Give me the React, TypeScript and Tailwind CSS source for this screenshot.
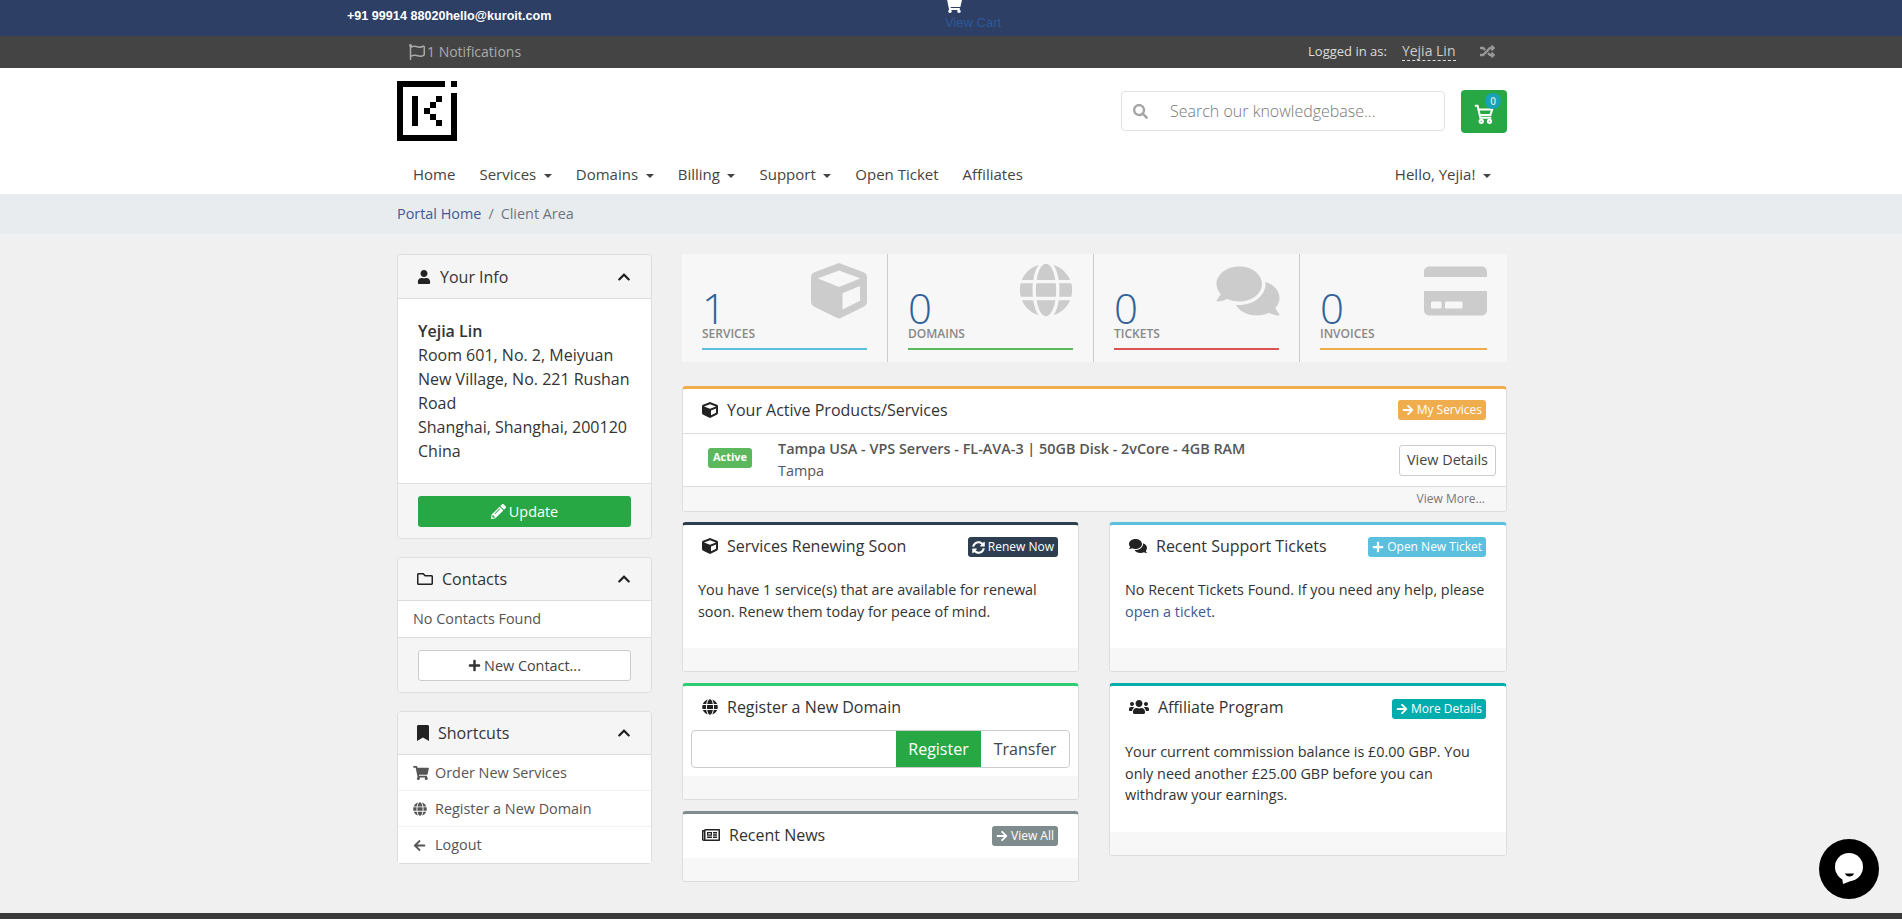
import React from 'react';
import {
  FaArrowLeft, FaArrowRight, FaBookmark, FaChevronUp, FaComments, FaCreditCard, FaCube, FaGlobe,
  FaPencilAlt, FaPlus, FaRandom, FaRegFlag, FaRegFolder, FaRegNewspaper, FaSearch, FaShoppingCart,
  FaSyncAlt, FaUser, FaUsers,
} from 'react-icons/fa';

const OPEN = "font-['Open_Sans',sans-serif]";

function Logo() {
  return (
    <svg width="60" height="60" viewBox="0 0 60 60" className="block">
      <rect x="0" y="0" width="48" height="6" />
      <rect x="54" y="0" width="6" height="6" />
      <rect x="0" y="0" width="6" height="60" />
      <rect x="0" y="54" width="60" height="6" />
      <rect x="54" y="12" width="6" height="48" />
      <rect x="15" y="15" width="6" height="30" />
      <rect x="39" y="15" width="6" height="6" />
      <rect x="33" y="21" width="6" height="6" />
      <rect x="27" y="27" width="6" height="6" />
      <rect x="33" y="33" width="6" height="6" />
      <rect x="39" y="39" width="6" height="6" />
    </svg>
  );
}

function Caret() {
  return <span className="ml-[7.6px] inline-block border-x-[4px] border-t-[4px] border-x-transparent border-t-[#444] align-[2px]" />;
}

function NavItem({ label, caret }: { label: string; caret?: boolean }) {
  return (
    <a className="px-3 text-[15px] leading-[24px] text-[#444] whitespace-nowrap">
      {label}
      {caret && <Caret />}
    </a>
  );
}

function SideHeader({ icon, title, tall }: { icon: React.ReactNode; title: string; tall?: boolean }) {
  return (
    <div className={`shrink-0 flex items-center justify-between bg-[#f5f5f5] border-b border-[#ddd] pl-[19px] pr-[20px] rounded-t-[4px] ${tall ? 'h-[44px]' : 'h-[43px]'}`}>
      <div className="flex items-center gap-[9px] text-[16px] text-[#333]">
        {icon}
        <span>{title}</span>
      </div>
      <FaChevronUp className="w-[14px] h-[14px] text-[#222]" />
    </div>
  );
}

function SideLink({ icon, label, last }: { icon: React.ReactNode; label: string; last?: boolean }) {
  return (
    <div className={`h-[36px] flex items-center pl-[15px] text-[14.4px] text-[#555] bg-white ${last ? '' : 'border-b border-[#f2f2f2]'}`}>
      <span className="w-[22px] flex items-center">{icon}</span>
      {label}
    </div>
  );
}

function Badge({ color, icon, label }: { color: string; icon: React.ReactNode; label: string }) {
  return (
    <span className={`h-[20px] px-[4px] rounded-[3px] flex items-center gap-[3px] text-[12px] font-medium text-white whitespace-nowrap ${color}`}>
      {icon}
      {label}
    </span>
  );
}

function Panel({ border, icon, title, badge, children }: {
  border: string; icon: React.ReactNode; title: string; badge?: React.ReactNode; children?: React.ReactNode;
}) {
  return (
    <div className={`rounded-[4px] border border-[#ddd] border-t-[3px] bg-white overflow-hidden flex flex-col ${border}`}>
      <div className="flex items-start justify-between pl-[19px] pr-[20px] pt-[10px]">
        <div className="flex items-center h-[22px] gap-[9px] text-[16px] text-[#333]">
          {icon}
          <span>{title}</span>
        </div>
        {badge && <div className="mt-[2px]">{badge}</div>}
      </div>
      <div className="flex-1">{children}</div>
      <div className="bg-[#f7f7f7] h-[23px]" />
    </div>
  );
}

function Stat({ value, label, line, icon, last }: { value: string; label: string; line: string; icon: React.ReactNode; last?: boolean }) {
  return (
    <div className={`relative h-[108px] bg-[#f7f7f7] px-[20px] pt-[36px] ${last ? 'flex-1' : 'w-[206px] border-r border-[#ccc]'}`}>
      <div className="text-[42px] leading-[36px] font-light text-[#2f6299]">{value}</div>
      <div className="text-[12px] leading-[16px] font-semibold text-[#888] uppercase">{label}</div>
      <div className={`mt-[6px] h-[2px] ${line}`} />
      <div className="absolute right-[20px] top-[9px] text-[#ccc]">{icon}</div>
    </div>
  );
}

export default function App() {
  return (
    <div className={`${OPEN} h-[919px] overflow-hidden flex flex-col bg-[#f0f0f0]`}>
      <div className="h-[36px] shrink-0 bg-[#2e3f66] relative font-['Liberation_Sans',sans-serif]">
        <div className="pl-[347px] pt-[8px] text-[12.6px] leading-[16px] font-bold text-white">+91 99914 88020hello@kuroit.com</div>
        <div className="absolute left-[944px] top-[-4px] flex flex-col items-start">
          <FaShoppingCart className="w-[18px] h-[18px] text-white" />
          <span className="ml-[1px] text-[13px] leading-[18px] text-[#2a5a9a]">View Cart</span>
        </div>
      </div>
      <div className="h-[32px] shrink-0 bg-[#444] flex items-center pl-[409px] pb-[1px]">
        <FaRegFlag className="w-[16px] h-[16px] text-[#aaa]" />
        <span className="ml-[2px] text-[14px] text-[#aaa]">1 Notifications</span>
        <span className="ml-[787px] text-[13px] text-[#ddd] whitespace-nowrap">Logged in as:</span>
        <span className="ml-[15px] text-[14px] leading-[18px] text-[#ccc] border-b border-dashed border-[#ddd] whitespace-nowrap">Yejia Lin</span>
        <FaRandom className="ml-[24px] w-[15px] h-[15px] text-[#999]" />
      </div>

      <div className="h-[126px] shrink-0 bg-white pl-[397px]">
        <div className="w-[1110px]">
          <div className="flex justify-between h-[94px]">
            <div className="pt-[13px]"><Logo /></div>
            <div className="flex pt-[23px] gap-[16px]">
              <div className="w-[324px] h-[40px] rounded-[4px] border border-[#e2e2e2] flex items-center pl-[11px]">
                <FaSearch className="w-[15px] h-[15px] text-[#a5a5a5]" />
                <span className="ml-[22px] text-[16px] font-light text-[#777]">Search our knowledgebase...</span>
              </div>
              <div className="relative -mt-[1px] w-[46px] h-[43px] rounded-[4px] bg-[#28a745] flex items-center justify-center">
                <svg width="22" height="22" viewBox="0 0 24 24" fill="none" stroke="white" strokeWidth="2.2" className="mt-[4px]">
                  <path d="M2 3h3l3 13h12" />
                  <path d="M6 7h15l-2 6H7.500" />
                  <circle cx="9" cy="20" r="1.8" />
                  <circle cx="18" cy="20" r="1.8" />
                </svg>
                <span className="absolute left-[24px] top-[3px] w-[16px] h-[16px] rounded-full bg-[#17a2b8] text-[10px] leading-[16px] text-center text-[#cdeee0] font-semibold">0</span>
              </div>
            </div>
          </div>
          <div className="flex justify-between items-center h-[24px] pl-[4px] pr-[4px]">
            <div className="flex">
              <NavItem label="Home" />
              <NavItem label="Services" caret />
              <NavItem label="Domains" caret />
              <NavItem label="Billing" caret />
              <NavItem label="Support" caret />
              <NavItem label="Open Ticket" />
              <NavItem label="Affiliates" />
            </div>
            <NavItem label="Hello, Yejia!" caret />
          </div>
        </div>
      </div>

      <div className="h-[40px] shrink-0 bg-[#e9ecef] flex items-center pl-[397px] pb-[1px] text-[14.4px]">
        <span className="text-[#44598f]">Portal Home</span>
        <span className="px-[7px] text-[#6c757d]">/</span>
        <span className="text-[#6c757d]">Client Area</span>
      </div>

      <div className="flex-1 pl-[397px] pt-[20px] flex gap-[30px] items-start">
        <div className="w-[255px] shrink-0 flex flex-col gap-[18px]">
          <div className="rounded-[4px] border border-[#ddd] bg-white">
            <SideHeader tall icon={<FaUser className="w-[14px] h-[14px] text-[#222]" />} title="Your Info" />
            <div className="h-[184px] px-[20px] pt-[20px] text-[16px] leading-[24px] text-[#333]">
              <div className="font-semibold">Yejia Lin</div>
              <div>Room 601, No. 2, Meiyuan New Village, No. 221 Rushan Road</div>
              <div>Shanghai, Shanghai, 200120</div>
              <div>China</div>
            </div>
            <div className="h-[55px] bg-[#f5f5f5] border-t border-[#ddd] rounded-b-[4px] px-[20px] pt-[12px]">
              <div className="h-[31px] rounded-[3px] bg-[#28a745] flex items-center justify-center gap-[3px] text-[14.4px] text-white">
                <FaPencilAlt className="w-[15px] h-[15px]" />Update
              </div>
            </div>
          </div>

          <div className="rounded-[4px] border border-[#ddd] bg-white">
            <SideHeader icon={<FaRegFolder className="w-[16px] h-[16px] text-[#222]" />} title="Contacts" />
            <div className="h-[36px] flex items-center pl-[15px] text-[14.4px] text-[#555]">No Contacts Found</div>
            <div className="h-[55px] bg-[#f5f5f5] border-t border-[#ddd] rounded-b-[4px] px-[20px] pt-[12px]">
              <div className="h-[31px] rounded-[3px] bg-white border border-[#ccc] flex items-center justify-center gap-[3px] text-[14.4px] text-[#444]">
                <FaPlus className="w-[13px] h-[13px] text-[#333]" />New Contact...
              </div>
            </div>
          </div>

          <div className="rounded-[4px] border border-[#ddd] bg-white">
            <SideHeader icon={<FaBookmark className="w-[12px] h-[16px] text-[#222]" />} title="Shortcuts" />
            <SideLink icon={<FaShoppingCart className="w-[16px] h-[14px] text-[#555]" />} label="Order New Services" />
            <SideLink icon={<FaGlobe className="w-[14px] h-[14px] text-[#555]" />} label="Register a New Domain" />
            <SideLink icon={<FaArrowLeft className="w-[13px] h-[13px] text-[#555]" />} label="Logout" last />
          </div>
        </div>

        <div className="w-[825px] shrink-0">
          <div className="flex">
            <Stat value="1" label="Services" line="bg-[#5bc0de]" icon={<FaCube className="w-[56px] h-[56px]" />} />
            <Stat value="0" label="Domains" line="bg-[#5cb85c]" icon={<FaGlobe className="w-[54px] h-[54px]" />} />
            <Stat value="0" label="Tickets" line="bg-[#d9534f]" icon={<div className="-mr-[1px]"><FaComments className="w-[64px] h-[56px]" /></div>} />
            <Stat value="0" label="Invoices" line="bg-[#f0ad4e]" icon={<FaCreditCard className="w-[63px] h-[56px]" />} last />
          </div>

          <div className="mt-[24px] rounded-[4px] border border-[#ddd] border-t-[3px] border-t-[#f0ad4e] bg-white overflow-hidden">
            <div className="h-[45px] flex items-center justify-between pl-[19px] pr-[20px] pb-[2px] border-b border-[#ddd]">
              <div className="flex items-center gap-[9px] text-[16px] text-[#333]">
                <FaCube className="w-[16px] h-[16px] text-[#222]" />Your Active Products/Services
              </div>
              <Badge color="bg-[#f0ad4e]" icon={<FaArrowRight className="w-[12px] h-[12px]" />} label="My Services" />
            </div>
            <div className="h-[53px] flex items-center pl-[25px] pr-[10px] border-b border-[#ddd]">
              <span className="-mt-[5px] w-[44px] h-[20px] rounded-[3px] bg-[#5cb85c] text-white text-[11px] font-bold flex items-center justify-center">Active</span>
              <div className="ml-[26px] flex-1 text-[14.4px] leading-[22px] text-[#555]">
                <div className="font-semibold">Tampa USA - VPS Servers - FL-AVA-3 | 50GB Disk - 2vCore - 4GB RAM</div>
                <div>Tampa</div>
              </div>
              <span className="w-[97px] h-[31px] rounded-[3px] border border-[#ccc] bg-white flex items-center justify-center text-[14.4px] text-[#444]">View Details</span>
            </div>
            <div className="h-[24px] bg-[#f7f7f7] flex items-center justify-end pr-[21px] text-[12px] text-[#777]">View More...</div>
          </div>

          <div className="mt-[10px] grid grid-cols-[397px_398px] gap-x-[30px] items-start">
            <div className="flex flex-col gap-[11px]">
              <div className="h-[150px] flex flex-col">
                <Panel border="border-t-[#2c3e50] flex-1" icon={<FaCube className="w-[16px] h-[16px] text-[#222]" />} title="Services Renewing Soon"
                  badge={<Badge color="bg-[#2c3e50]" icon={<FaSyncAlt className="w-[13px] h-[13px]" />} label="Renew Now" />}>
                  <div className="px-[15px] pt-[22px] text-[14.4px] leading-[22px] text-[#333]">You have 1 service(s) that are available for renewal soon. Renew them today for peace of mind.</div>
                </Panel>
              </div>
              <div className="h-[117px] flex flex-col">
                <Panel border="border-t-[#2ecc71] flex-1" icon={<FaGlobe className="w-[16px] h-[16px] text-[#222]" />} title="Register a New Domain">
                  <div className="mx-[8px] mt-[12px] h-[38px] flex rounded-[4px] border border-[#ccc] overflow-hidden">
                    <div className="flex-1" />
                    <span className="w-[85px] bg-[#28a745] text-white text-[16px] flex items-center justify-center">Register</span>
                    <span className="w-[88px] text-[#444] text-[16px] flex items-center justify-center">Transfer</span>
                  </div>
                </Panel>
              </div>
              <div className="h-[71px] flex flex-col">
                <Panel border="border-t-[#7f8c8d] flex-1" icon={<FaRegNewspaper className="w-[18px] h-[16px] text-[#222]" />} title="Recent News"
                  badge={<Badge color="bg-[#7f8c8d]" icon={<FaArrowRight className="w-[12px] h-[12px]" />} label="View All" />} />
              </div>
            </div>
            <div className="flex flex-col gap-[11px]">
              <div className="h-[150px] flex flex-col">
                <Panel border="border-t-[#5bc0de] flex-1" icon={<FaComments className="w-[18px] h-[16px] text-[#222]" />} title="Recent Support Tickets"
                  badge={<Badge color="bg-[#5bc0de]" icon={<FaPlus className="w-[12px] h-[12px]" />} label="Open New Ticket" />}>
                  <div className="px-[15px] pt-[22px] text-[14.4px] leading-[22px] text-[#333]">No Recent Tickets Found. If you need any help, please <span className="text-[#44598f]">open a ticket</span>.</div>
                </Panel>
              </div>
              <div className="h-[173px] flex flex-col">
                <Panel border="border-t-[#00adad] flex-1" icon={<FaUsers className="w-[20px] h-[16px] text-[#222]" />} title="Affiliate Program"
                  badge={<div className="mt-[1px]"><Badge color="bg-[#00adad]" icon={<FaArrowRight className="w-[12px] h-[12px]" />} label="More Details" /></div>}>
                  <div className="px-[15px] pt-[22px] text-[14.4px] leading-[21.5px] text-[#333]">Your current commission balance is £0.00 GBP. You only need another £25.00 GBP before you can withdraw your earnings.</div>
                </Panel>
              </div>
            </div>
          </div>
        </div>
      </div>

      <div className="h-[6px] shrink-0 bg-[#3a3a3a]" />

      <div className="absolute left-[1819px] top-[839px] w-[60px] h-[60px] rounded-full bg-black flex items-center justify-center">
        <svg width="30" height="32" viewBox="0 0 30 32">
          <circle cx="15" cy="14" r="14" fill="white" />
          <path d="M8 24L9 31L22 26z" fill="white" />
          <path d="M11 20.500h9c-1 4-8 4-9 0z" fill="black" />
        </svg>
      </div>
    </div>
  );
}
